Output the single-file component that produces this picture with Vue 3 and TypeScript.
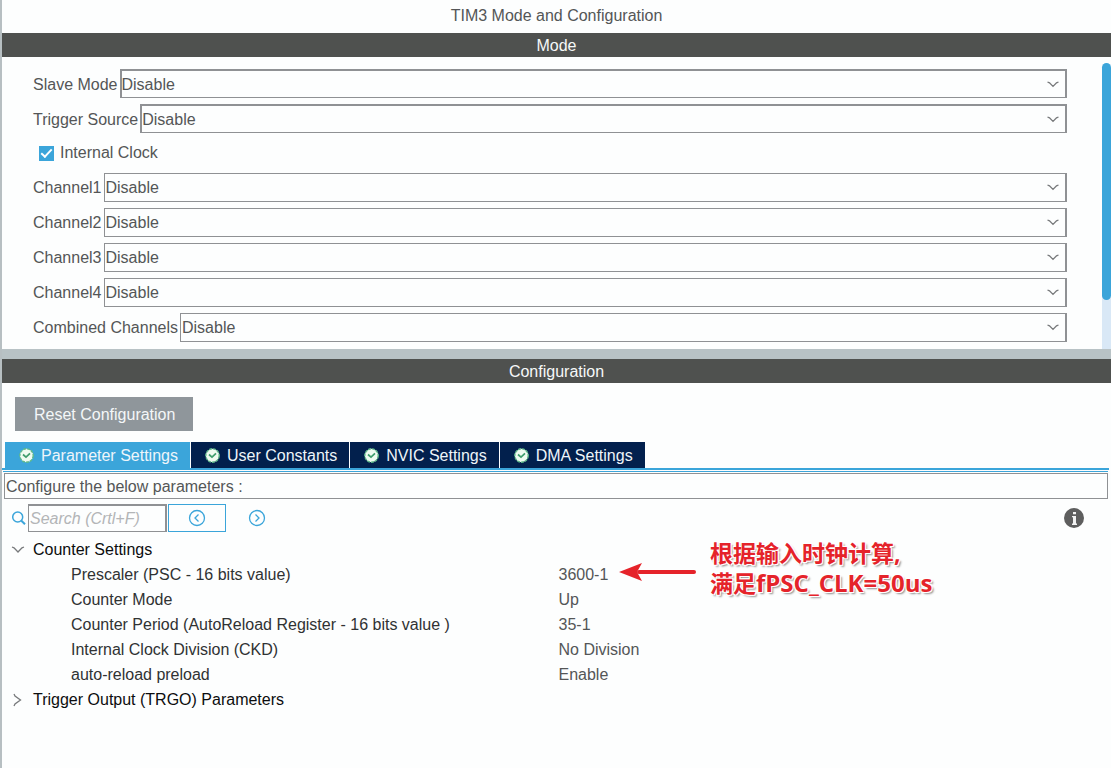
<script setup lang="ts">
import { ref } from 'vue'

interface ModeField {
  id: string
  label: string
  strong?: boolean
  check?: boolean
}

interface Param {
  name: string
  value: string
}

const fields: ModeField[] = [
  { id: 'slave', label: 'Slave Mode', strong: true },
  { id: 'trigger', label: 'Trigger Source', strong: true },
  { id: 'clock', label: 'Internal Clock', check: true },
  { id: 'ch1', label: 'Channel1' },
  { id: 'ch2', label: 'Channel2' },
  { id: 'ch3', label: 'Channel3' },
  { id: 'ch4', label: 'Channel4' },
  { id: 'combined', label: 'Combined Channels' },
]

const tabs: string[] = ['Parameter Settings', 'User Constants', 'NVIC Settings', 'DMA Settings']
const activeTab = ref(0)
const internalClock = ref(true)
const counterOpen = ref(true)

const params: Param[] = [
  { name: 'Prescaler (PSC - 16 bits value)', value: '3600-1' },
  { name: 'Counter Mode', value: 'Up' },
  { name: 'Counter Period (AutoReload Register - 16 bits value )', value: '35-1' },
  { name: 'Internal Clock Division (CKD)', value: 'No Division' },
  { name: 'auto-reload preload', value: 'Enable' },
]
</script>

<template>
  <main class="app">
    <h1 class="title">TIM3 Mode and Configuration</h1>

    <section class="mode">
      <h2 class="bar">Mode</h2>
      <div class="mode-body">
        <div class="fields">
          <template v-for="f in fields" :key="f.id">
            <div v-if="f.check" class="check-row">
              <input :id="f.id" v-model="internalClock" class="check" type="checkbox" />
              <label :for="f.id">{{ f.label }}</label>
            </div>
            <div v-else class="field" :class="{ strong: f.strong }">
              <label :for="f.id">{{ f.label }}</label>
              <div class="select-wrap">
                <select :id="f.id" class="select">
                  <option>Disable</option>
                </select>
                <svg class="chevron" width="12" height="7" viewBox="0 0 12 7" aria-hidden="true">
                  <path d="M0.5 1 L2.5 1.8 L6 5.4 L9.5 1.8 L11.5 1" />
                </svg>
              </div>
            </div>
          </template>
        </div>
        <div class="track"><div class="thumb"></div></div>
      </div>
    </section>

    <div class="splitter"></div>

    <section class="config">
      <h2 class="bar">Configuration</h2>
      <button class="reset" type="button">Reset Configuration</button>

      <div class="tabs" role="tablist">
        <button
          v-for="(t, i) in tabs"
          :key="t"
          class="tab"
          :class="{ active: i === activeTab }"
          type="button"
          role="tab"
          :aria-selected="i === activeTab"
          @click="activeTab = i"
        >
          <svg width="15" height="15" viewBox="0 0 15 15" aria-hidden="true">
            <circle cx="7.5" cy="7.5" r="6.7" fill="#effbf0" stroke="#5fb98a" stroke-width="1.4" stroke-dasharray="3 1" />
            <path d="M4 6.5 L7 9.2 L11 5.3" fill="none" stroke="#3f9d6c" stroke-width="1.7" />
          </svg>
          <span>{{ t }}</span>
        </button>
      </div>

      <div class="panel">
        <p class="hint">Configure the below parameters :</p>

        <div class="toolbar">
          <svg class="search-icon" width="16" height="16" viewBox="0 0 16 16" aria-hidden="true">
            <circle cx="6.7" cy="7" r="5" fill="none" stroke="#3ba5da" stroke-width="1.5" />
            <path d="M10.4 10.7 L14 14.3" stroke="#3ba5da" stroke-width="2" />
          </svg>
          <input class="search" type="text" placeholder="Search (Crtl+F)" aria-label="Search" />
          <button class="nav framed" type="button" aria-label="Previous match">
            <svg width="18" height="18" viewBox="0 0 18 18" aria-hidden="true">
              <circle cx="9" cy="9" r="7.5" />
              <path d="M10.5 5.5 L7 9 L10.5 12.5" />
            </svg>
          </button>
          <button class="nav" type="button" aria-label="Next match">
            <svg width="18" height="18" viewBox="0 0 18 18" aria-hidden="true">
              <circle cx="9" cy="9" r="7.5" />
              <path d="M7.5 5.5 L11 9 L7.5 12.5" />
            </svg>
          </button>
          <button class="info" type="button" aria-label="Information">
            <svg width="20" height="20" viewBox="0 0 20 20" aria-hidden="true">
              <circle cx="10" cy="10" r="10" fill="#5e5e5e" />
              <path d="M9 4 H12 V6.3 H9 Z M8 8 H12 V15.5 H13 V17 H8 V15.5 H9 V9.3 H8 Z" fill="#f2f2f2" />
            </svg>
          </button>
        </div>

        <div class="tree-wrap">
          <table class="tree">
            <tbody>
              <tr>
                <th colspan="2" scope="rowgroup">
                  <button class="group" type="button" :aria-expanded="counterOpen" @click="counterOpen = !counterOpen">
                    <svg width="14" height="14" viewBox="0 0 14 14" aria-hidden="true">
                      <path d="M1 4 L3 4.8 L7 9 L11 4.8 L13 4" />
                    </svg>
                    <span>Counter Settings</span>
                  </button>
                </th>
              </tr>
              <template v-if="counterOpen">
                <tr v-for="p in params" :key="p.name">
                  <td class="name">{{ p.name }}</td>
                  <td class="value">{{ p.value }}</td>
                </tr>
              </template>
              <tr>
                <th colspan="2" scope="rowgroup">
                  <button class="group" type="button" aria-expanded="false">
                    <svg width="14" height="14" viewBox="0 0 14 14" aria-hidden="true">
                      <path d="M3 1 L4 3 L9.5 7 L4 11 L3 13" />
                    </svg>
                    <span>Trigger Output (TRGO) Parameters</span>
                  </button>
                </th>
              </tr>
            </tbody>
          </table>

          <aside class="note">
            <svg width="78" height="20" viewBox="0 0 78 20" aria-hidden="true">
              <path d="M20 10 H75" stroke="#e5232a" stroke-width="4" stroke-linecap="round" />
              <path d="M0 10 L23 1 L18 10 L23 19 Z" fill="#e5232a" />
            </svg>
            <p>根据输入时钟计算,<br />满足<span class="latin">fPSC_CLK=50us</span></p>
          </aside>
        </div>
      </div>
    </section>
  </main>
</template>

<style>
body {
  margin: 0;
  background: #fdfefe;
}
</style>

<style scoped>
.app {
  box-sizing: border-box;
  min-height: 100vh;
  display: flex;
  flex-direction: column;
  border-left: 2px solid #b7bfc2;
  background: #fdfefe;
  color: #545657;
  font: 16px/20px "Liberation Sans", Arial, sans-serif;
}
button,
input,
select {
  box-sizing: border-box;
  margin: 0;
  font: inherit;
  color: inherit;
}
button {
  padding: 0;
  border: 0;
  background: none;
}
.title {
  margin: 0;
  font-size: 16px;
  font-weight: 400;
  line-height: 31px;
  padding-bottom: 2px;
  text-align: center;
}
.bar {
  margin: 0;
  padding-top: 2px;
  background: #4f514f;
  color: #f6f8f8;
  font-size: 16px;
  font-weight: 400;
  line-height: 22px;
  text-align: center;
}
.mode-body {
  display: flex;
  justify-content: space-between;
}
.fields {
  flex: 1;
  display: flex;
  flex-direction: column;
  gap: 6px;
  padding: 12px 35px 7px 31px;
}
.field {
  display: flex;
  align-items: center;
  gap: 2px;
}
.select-wrap {
  flex: 1;
  display: grid;
  align-items: center;
}
.select {
  grid-area: 1 / 1;
  width: 100%;
  height: 29px;
  padding: 0 24px 0 1px;
  appearance: none;
  border: 1px solid #8f9194;
  border-right-width: 2px;
  border-radius: 0;
  background: #fdfefe;
}
.strong .select {
  padding: 1px 24px 0 0;
  border-width: 2px 2px 1px 2px;
}
.strong label,
.strong .chevron {
  padding-top: 2px;
}
.strong .chevron {
  box-sizing: content-box;
}
.chevron {
  grid-area: 1 / 1;
  justify-self: end;
  margin-right: 8px;
  pointer-events: none;
}
.chevron path,
.group path {
  fill: none;
  stroke: #77797b;
  stroke-width: 1.3;
}
.check-row {
  display: flex;
  align-items: center;
  gap: 6px;
  height: 28px;
  padding-left: 6px;
}
.check {
  width: 15px;
  height: 15px;
  appearance: none;
  display: grid;
  place-items: center;
  border: 1px solid #3ba5da;
}
.check:checked {
  background: #3ba5da;
}
.check:checked::after {
  content: "";
  box-sizing: border-box;
  width: 11px;
  height: 6px;
  margin-bottom: 3px;
  border: solid #ffffff;
  border-width: 0 0 2px 2px;
  transform: rotate(-47deg);
}
.track {
  display: flex;
  width: 9px;
  padding-top: 6px;
  background: linear-gradient(#fdfefe 50%, #d9e8f6 50%);
}
.thumb {
  width: 9px;
  height: 83%;
  border-radius: 5px;
  background: #3ba5da;
}
.splitter {
  height: 10px;
  background: #b8c2c5;
}
.config {
  flex: 1;
  display: flex;
  flex-direction: column;
}
.reset {
  align-self: flex-start;
  height: 34px;
  margin: 14px 13px 11px;
  padding: 2px 18px 0 19px;
  background: #8f969b;
  color: #f4f7f8;
}
.tabs {
  display: flex;
  gap: 1px;
  margin-right: 2px;
  padding-left: 3px;
  border-bottom: 2px solid #3ba5da;
}
.tab {
  display: flex;
  align-items: center;
  gap: 7px;
  height: 26px;
  padding: 0 12px 0 14px;
  background: #02204d;
  color: #eef5fa;
}
.tab span {
  padding-top: 2px;
}
.tab.active {
  background: #3ba5da;
}
.panel {
  flex: 1;
  margin: 1px 3px 0 1px;
  border-top: 1px solid #3ba5da;
}
.hint {
  margin: 1px 0 0 1px;
  padding: 2px 1px 0;
  border: 1px solid #8f9194;
  line-height: 22px;
}
.toolbar {
  display: flex;
  align-items: center;
  height: 28px;
  margin: 5px 24px 5px 8px;
}
.search {
  width: 139px;
  height: 28px;
  margin: 0 1px 0 0;
  padding: 1px 2px 0 1px;
  border: 1px solid #8f9194;
  border-width: 2px 2px 1px 1px;
  border-radius: 0;
  background: #fdfefe;
}
.search-icon {
  margin-right: 1px;
}
.search::placeholder {
  color: #b3b5b7;
  font-style: italic;
  opacity: 1;
}
.nav {
  display: grid;
  place-items: center;
  width: 58px;
  height: 28px;
}
.nav.framed {
  border: 1px solid #3ba5da;
}
.nav + .nav {
  margin-left: 2px;
}
.nav svg {
  fill: none;
  stroke: #3ba5da;
  stroke-width: 1.3;
}
.info {
  display: grid;
  margin-left: auto;
}
.tree-wrap {
  position: relative;
}
.tree {
  width: 100%;
  border-collapse: collapse;
  table-layout: fixed;
}
.tree th,
.tree td {
  height: 25px;
  padding: 0;
  text-align: left;
  font-weight: 400;
}
.tree .name {
  padding-left: 68px;
  color: #303233;
}
.tree .value {
  padding-left: 3px;
}
.group {
  display: flex;
  align-items: center;
  gap: 8px;
  padding-left: 8px;
  color: #0c0d0e;
}
.note {
  position: absolute;
  top: 1px;
  left: 616px;
  display: flex;
  align-items: flex-start;
  gap: 13px;
  color: #e5232a;
  font: 700 23px/30px "Open Sans", "Noto Sans CJK SC", sans-serif;
}
.note svg {
  margin-top: 24px;
}
.note p {
  margin: 0;
  text-shadow:
    -1px -1px 0 #ffffff,
    1px -1px 0 #ffffff,
    -1px 1px 0 #ffffff,
    1px 1px 0 #ffffff,
    2px 2px 2px #8c8c8c;
}
.latin {
  font-size: 24px;
}
</style>
